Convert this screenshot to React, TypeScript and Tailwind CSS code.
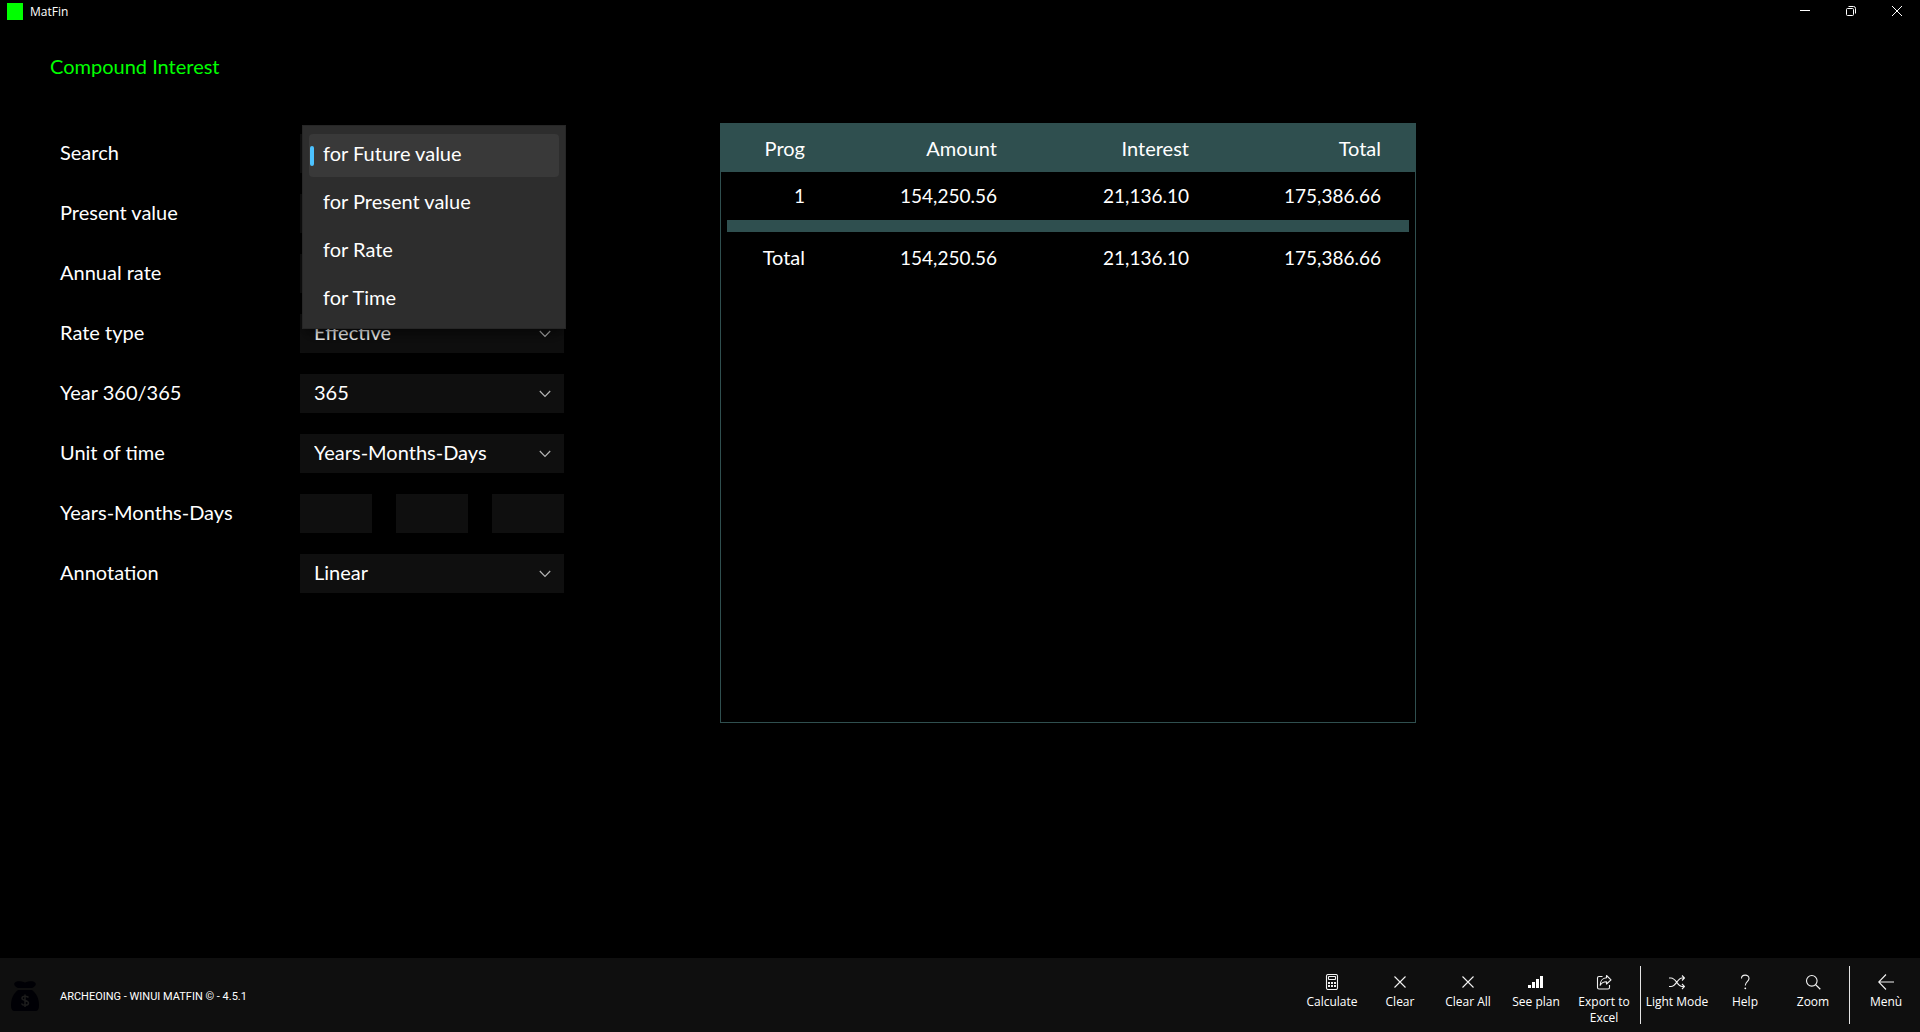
import { useState } from 'react';
import type { ReactNode } from 'react';

const searchOptions = ['for Future value', 'for Present value', 'for Rate', 'for Time'];

const planRows = [
  { prog: 1, amount: '154,250.56', interest: '21,136.10', total: '175,386.66' },
];

const Chevron = () => (
  <svg className="pointer-events-none absolute right-[13px] top-4" width="12" height="8" viewBox="0 0 12 8" fill="none" stroke="#b4b4b4" strokeWidth="1.2">
    <path d="M0.8 1 L6 6.3 L11.2 1" />
  </svg>
);

const SelectField = ({ id, options }: { id: string; options: string[] }) => {
  const [value, setValue] = useState(options[0]);
  return (
    <div className="relative w-full">
      <select
        id={id}
        value={value}
        onChange={(e) => setValue(e.target.value)}
        className="block h-[39px] w-full appearance-none bg-[#0f0f0f] pb-[3px] pl-[14px] pr-8 text-white outline-none"
      >
        {options.map((option) => (
          <option key={option}>{option}</option>
        ))}
      </select>
      <Chevron />
    </div>
  );
};

const Row = ({ label, htmlFor, children }: { label: string; htmlFor: string; children: ReactNode }) => (
  <div className="flex h-[60px] items-center pt-px">
    <label htmlFor={htmlFor} className="w-60 shrink-0 pb-[3px]">{label}</label>
    <div className="relative flex w-[264px] justify-between">{children}</div>
  </div>
);

const inputClass = 'h-[39px] w-full bg-[#0f0f0f] px-[14px] text-white outline-none';
const smallInputClass = 'h-[39px] w-[72px] bg-[#0f0f0f] px-2 text-white outline-none';

const ToolButton = ({ label, children }: { label: string; children: ReactNode }) => (
  <button type="button" className="flex w-[68px] flex-col items-center pt-4 text-[12px] leading-4 text-white">
    <svg className="mb-1" width="16" height="16" viewBox="0 0 16 16" fill="none" stroke="#f2f2f2" strokeWidth="1.1">
      {children}
    </svg>
    <span>{label}</span>
  </button>
);

const Separator = () => (
  <div className="flex w-[5px] justify-center py-2">
    <div className="w-px bg-[#e4e4e4]" />
  </div>
);

const App = () => {
  const [selected, setSelected] = useState(searchOptions[0]);
  const [open, setOpen] = useState(true);

  const pick = (option: string) => {
    setSelected(option);
    setOpen(false);
  };

  return (
    <div className="flex min-h-screen flex-col bg-black font-[Lato,sans-serif] text-[20px] leading-6 text-white">
      <header className="flex h-[22px] items-center justify-between font-['Open_Sans',sans-serif] text-[12px]">
        <div className="flex items-center gap-[7px] pl-[7px]">
          <div className="h-[17px] w-4 bg-[#00ff00]" />
          <span className="pt-[2px]">MatFin</span>
        </div>
        <div className="flex">
          <button type="button" aria-label="Minimize" className="flex h-[22px] w-[46px] items-center justify-center">
            <svg width="10" height="10" viewBox="0 0 10 10" stroke="white"><path d="M0 4.5H10" /></svg>
          </button>
          <button type="button" aria-label="Restore" className="flex h-[22px] w-[46px] items-center justify-center">
            <svg width="10" height="10" viewBox="0 0 10 10" fill="none" stroke="white">
              <rect x="0.5" y="2.5" width="7" height="7" rx="1" />
              <path d="M2.5 0.5H7.5Q9.5 0.5 9.5 2.5V7.5" />
            </svg>
          </button>
          <button type="button" aria-label="Close" className="flex h-[22px] w-[46px] items-center justify-center">
            <svg width="10" height="10" viewBox="0 0 10 10" stroke="white"><path d="M0 0L10 10M10 0L0 10" /></svg>
          </button>
        </div>
      </header>

      <main className="flex-1">
        <h1 className="ml-[50px] mt-8 text-[#00ff00]">Compound Interest</h1>

        <div className="mt-[45px] flex items-start">
          <form className="ml-[60px] mr-[156px] shrink-0" onSubmit={(e) => e.preventDefault()}>
            <Row label="Search" htmlFor="search">
              <select
                id="search"
                value={selected}
                onMouseDown={(e) => {
                  e.preventDefault();
                  setOpen(!open);
                }}
                onChange={(e) => setSelected(e.target.value)}
                className="block h-[39px] w-full appearance-none bg-[#0f0f0f] px-[14px] pb-[3px] text-white outline-none"
              >
                {searchOptions.map((option) => (
                  <option key={option}>{option}</option>
                ))}
              </select>
              {open && (
                <div role="listbox" aria-label="Search" className="absolute -top-[9px] left-[2px] z-10 flex h-[204px] w-[264px] flex-col gap-[5px] border border-[#262626] bg-[#2d2d2d] px-[6px] py-2 shadow-lg shadow-black/40">
                  {searchOptions.map((option) => (
                    <button
                      key={option}
                      type="button"
                      role="option"
                      aria-selected={option === selected}
                      onClick={() => pick(option)}
                      className={`flex h-[43px] shrink-0 items-center gap-[9px] rounded pl-px text-left ${option === selected ? 'bg-[#393939]' : ''}`}
                    >
                      <span className={`h-5 w-1 rounded-full ${option === selected ? 'bg-[#4cc2ff]' : ''}`} />
                      <span className="pb-[5px]">{option}</span>
                    </button>
                  ))}
                </div>
              )}
            </Row>
            <Row label="Present value" htmlFor="present">
              <input id="present" className={inputClass} />
            </Row>
            <Row label="Annual rate" htmlFor="rate">
              <input id="rate" className={inputClass} />
            </Row>
            <Row label="Rate type" htmlFor="rateType">
              <SelectField id="rateType" options={['Effective', 'Nominal']} />
            </Row>
            <Row label="Year 360/365" htmlFor="year">
              <SelectField id="year" options={['365', '360']} />
            </Row>
            <Row label="Unit of time" htmlFor="unit">
              <SelectField id="unit" options={['Years-Months-Days', 'Years', 'Months', 'Days']} />
            </Row>
            <Row label="Years-Months-Days" htmlFor="years">
              <input id="years" className={smallInputClass} />
              <input aria-label="Months" className={smallInputClass} />
              <input aria-label="Days" className={smallInputClass} />
            </Row>
            <Row label="Annotation" htmlFor="annotation">
              <SelectField id="annotation" options={['Linear', 'Compound']} />
            </Row>
          </form>

          <div className="min-h-[600px] w-[696px] border border-[#2f4f4f]">
            <table className="w-full table-fixed text-right text-[19px]">
              <colgroup>
                <col className="w-[84px]" />
                <col className="w-48" />
                <col className="w-48" />
                <col className="w-48" />
                <col />
              </colgroup>
              <thead className="bg-[#2f4f4f] text-[20px]">
                <tr className="h-12">
                  <th className="font-normal">Prog</th>
                  <th className="font-normal">Amount</th>
                  <th className="font-normal">Interest</th>
                  <th className="font-normal">Total</th>
                  <td />
                </tr>
              </thead>
              <tbody>
                {planRows.map((row) => (
                  <tr key={row.prog} className="h-12">
                    <td>{row.prog}</td>
                    <td>{row.amount}</td>
                    <td>{row.interest}</td>
                    <td>{row.total}</td>
                    <td />
                  </tr>
                ))}
              </tbody>
              <tfoot>
                <tr>
                  <td colSpan={5} className="px-[6px]">
                    <div className="h-3 bg-[#2f4f4f]" />
                  </td>
                </tr>
                <tr className="h-[52px]">
                  <td className="pb-[2px] text-[20px]">Total</td>
                  <td>154,250.56</td>
                  <td>21,136.10</td>
                  <td>175,386.66</td>
                  <td />
                </tr>
              </tfoot>
            </table>
          </div>
        </div>
      </main>

      <footer className="flex h-[74px] justify-between bg-[#0f0f0f] font-['Open_Sans',sans-serif]">
        <div className="flex items-center gap-[21px] pl-[11px] pt-[2px] font-[Roboto,sans-serif] text-[11px]">
          <svg width="28" height="30" viewBox="0 0 28 30">
            <path fill="#000005" d="M4 1.5C6 -0.5 10 0 14 1.5C18 0 22 -0.5 24 1.5C26 3 24 6 21 7H7C4 6 2 3 4 1.5Z" />
            <path fill="#000005" d="M7 9H21C25 12 28 17 28 24C28 28 27 30 24 30H4C1 30 0 28 0 24C0 17 3 12 7 9Z" />
            <path fill="none" stroke="#1c1c1c" strokeWidth="1.5" d="M17.5 16.5C16.5 14.8 11 14.5 11 17.2C11 20 17.5 18.8 17.5 22C17.5 25 11.5 24.8 10.5 22.5M14 13.5V26" />
          </svg>
          <span className="pt-[2px]">ARCHEOING - WINUI MATFIN © - 4.5.1</span>
        </div>
        <nav className="flex">
          <ToolButton label="Calculate">
            <rect x="2.5" y="0.5" width="11" height="15" rx="1.5" />
            <rect x="4.5" y="2.5" width="7" height="3" rx="0.5" />
            <path strokeWidth="2" strokeDasharray="2 1" d="M4 9H12M4 12H12" />
          </ToolButton>
          <ToolButton label="Clear">
            <path d="M2.5 2.5L13.5 13.5M13.5 2.5L2.5 13.5" />
          </ToolButton>
          <ToolButton label="Clear All">
            <path d="M2.5 2.5L13.5 13.5M13.5 2.5L2.5 13.5" />
          </ToolButton>
          <ToolButton label="See plan">
            <path fill="white" stroke="none" d="M0 11H3V14H0ZM4 8H7V14H4ZM8 5H11V14H8ZM12 2H15V14H12Z" />
          </ToolButton>
          <ToolButton label="Export to Excel">
            <path d="M6.5 2.5H3Q1.5 2.5 1.5 4V13.5Q1.5 15 3 15H12Q13.5 15 13.5 13.5V11" />
            <path strokeLinejoin="round" d="M10.5 1.5L15 5.8L10.5 10V7.7C7.8 7.6 5.6 8.8 4.2 11.2C4.2 7 6.7 4 10.5 3.8Z" />
          </ToolButton>
          <Separator />
          <ToolButton label="Light Mode">
            <path d="M0 4H2C7 4 8.5 12.5 13 12.5H15.5M0 12.5H2C7 12.5 8.5 4 13 4H15.5M13 1.5L15.5 4L13 6.5M13 10L15.5 12.5L13 15" />
          </ToolButton>
          <ToolButton label="Help">
            <path d="M4.5 4.5C4.5 0 12 0 12 4.5C12 7.5 8.3 8 8.3 11.5" />
            <circle cx="8.3" cy="14.3" r="0.9" fill="white" stroke="none" />
          </ToolButton>
          <ToolButton label="Zoom">
            <circle cx="6.8" cy="6.8" r="5.3" />
            <path strokeWidth="1.3" d="M10.6 10.6L15.3 15.3" />
          </ToolButton>
          <Separator />
          <ToolButton label="Menù">
            <path d="M16 8H1M8 0.5L0.7 8L8 15.5" />
          </ToolButton>
        </nav>
      </footer>
    </div>
  );
};

export default App;
